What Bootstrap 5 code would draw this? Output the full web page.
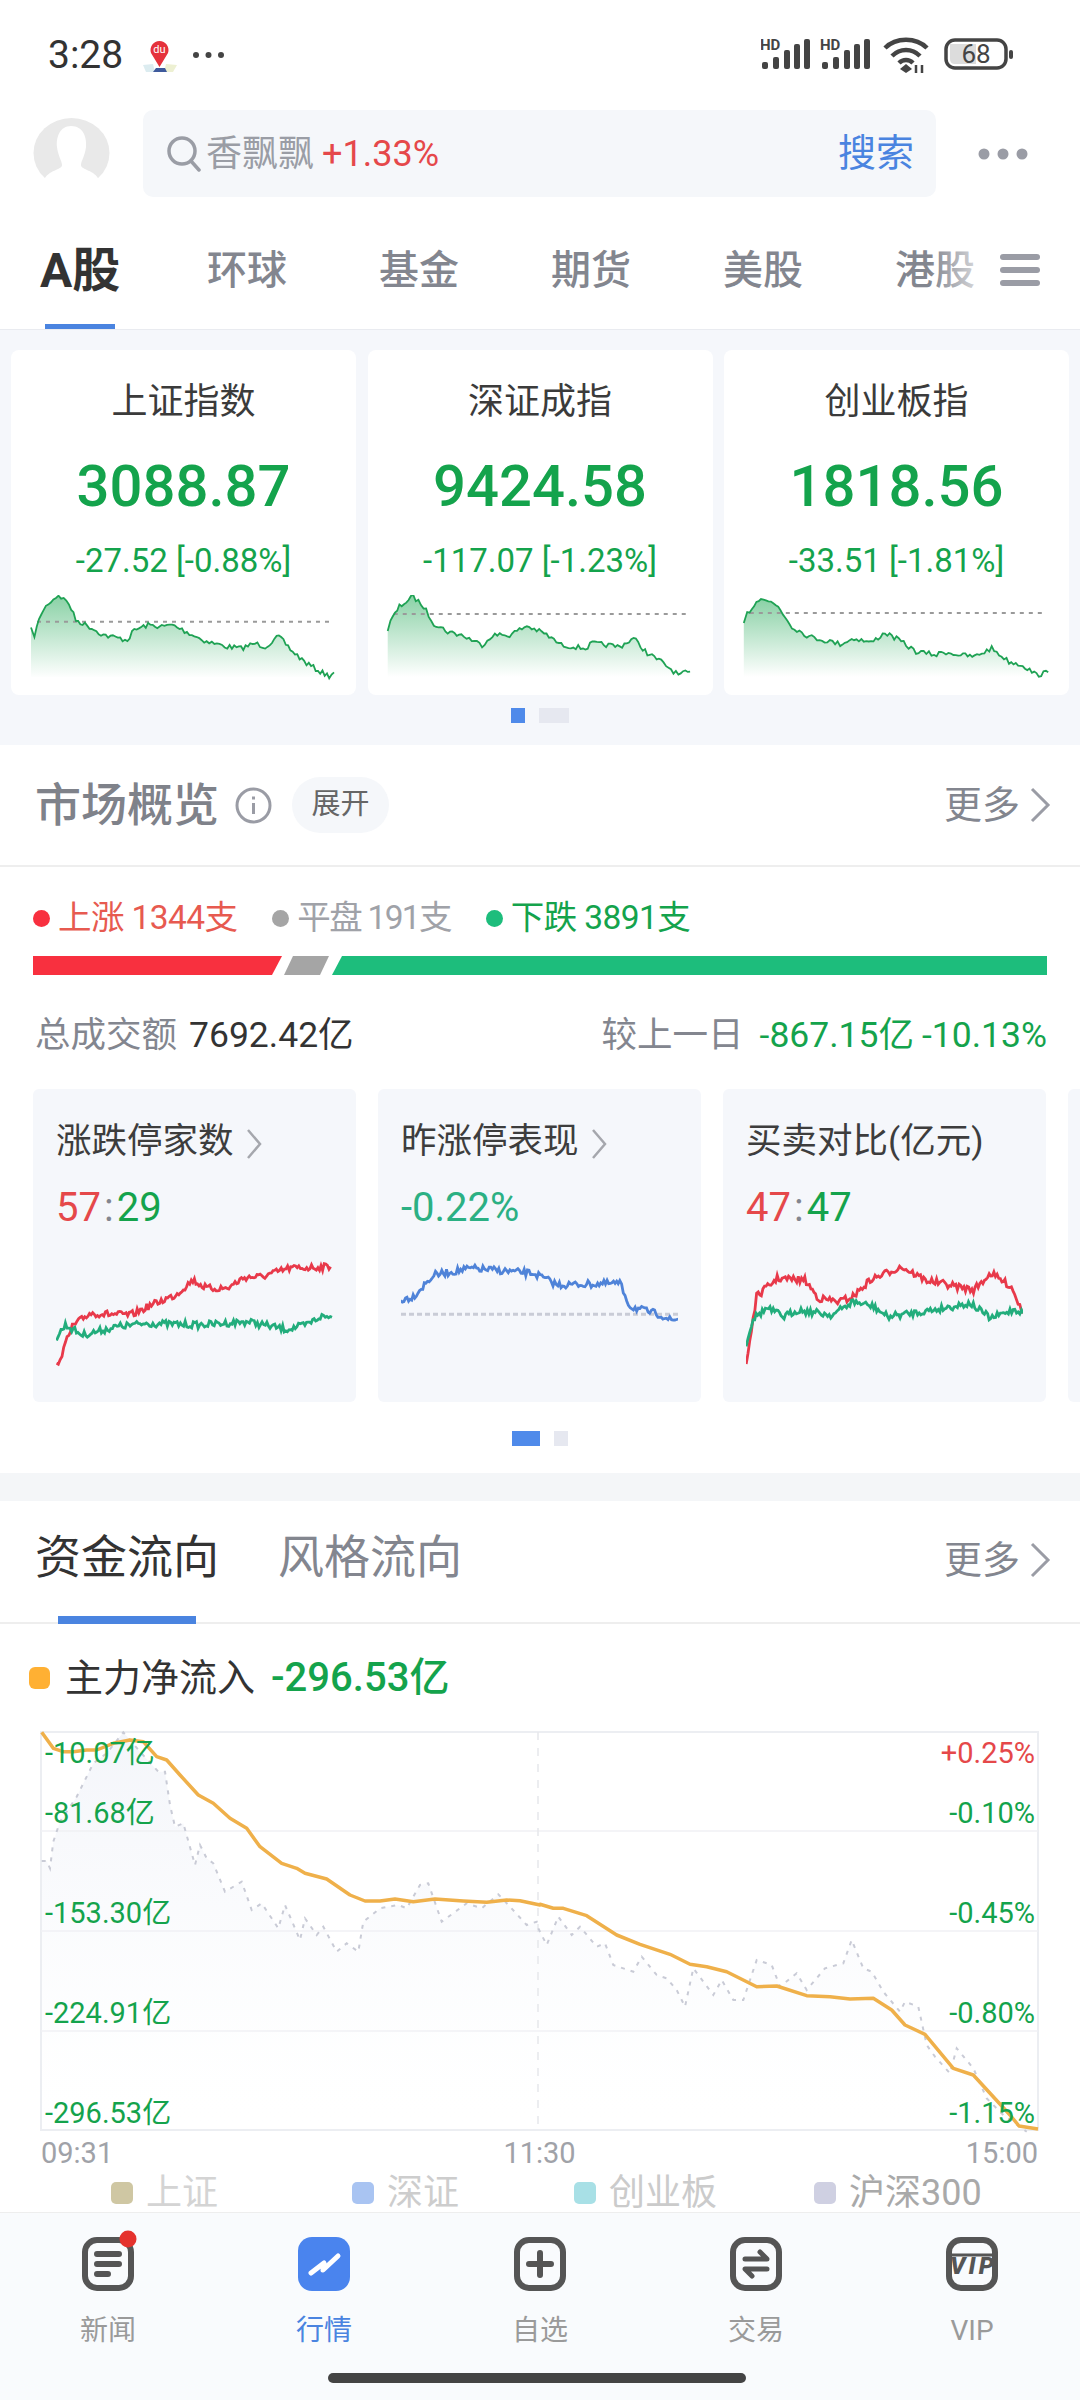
<!DOCTYPE html>
<html lang="zh-CN">
<head>
  <meta charset="UTF-8" />
  <meta name="viewport" content="width=device-width, initial-scale=1.0" />
  <title>行情</title>
  <link href="https://cdn.jsdelivr.net/npm/bootstrap@5.3.3/dist/css/bootstrap.min.css" rel="stylesheet" />
  <style>
    body { width: 1080px; height: 2400px; overflow: hidden; background: #fff; color: #333; font-family: Roboto, "Noto Sans CJK SC", sans-serif; }
    .c-red { color: #e5484a; }
    .c-green { color: #14a34c; }
    .c-gray { color: #83868f; }

    .status-bar { height: 110px; padding: 0 67px 0 48px; }
    .status-time { font-size: 39px; line-height: 40px; color: #333; margin-right: 19px; }
    .status-dots { margin-left: 14px; }

    .search-row { height: 87px; padding-left: 33px; }
    .search-box { width: 793px; height: 87px; margin-left: 33px; padding: 0 22px 0 24px; background: #f5f7fa; border-radius: 10px; font-size: 36px; }
    .search-hint { color: #9a9da5; margin-left: 5px; }
    .search-rise { font-size: 36px; margin-left: 8px; }
    .search-btn { color: #4a84e0; font-size: 38px; margin-left: auto; }
    .search-more { margin-left: 42px; }

    .tabs-row { height: 133px; padding: 51px 0 0 40px; border-bottom: 1px solid #e9ebf0; overflow: hidden; }
    .tab-item { width: 80px; flex: none; margin-right: 92px; font-size: 40px; line-height: 46px; font-weight: 500; color: #83868f; white-space: nowrap; }
    .tab-item.on { margin-right: 87px; font-size: 48px; font-weight: 700; color: #333; }
    .tab-item.on::after { content: ""; display: block; width: 70px; height: 8px; margin: 30px 0 0 5px; background: #4a84e0; }
    .tabs-menu { right: 0; top: 0; bottom: 1px; width: 150px; padding: 57px 0 0 70px; background: linear-gradient(90deg, rgba(255,255,255,0), #fff 47%); }
    .tabs-menu i { display: block; width: 40px; height: 6px; margin-bottom: 7px; border-radius: 3px; background: #9a9ca5; }

    .index-wrap { height: 415px; padding: 20px 11px 0; background: #f5f7fb; }
    .index-card { width: 345px; height: 345px; flex: none; background: #fff; border-radius: 8px; text-align: center; }
    .index-name { margin-top: 27px; font-size: 36px; line-height: 50px; color: #3b3b3b; }
    .index-num { margin-top: 24px; font-size: 58px; line-height: 70px; font-weight: 500; color: #14a34c; }
    .index-delta { margin-top: 20px; font-size: 33px; line-height: 40px; color: #14a34c; white-space: nowrap; }
    .index-card svg { display: block; margin-top: 14px; }

    .pager-blue, .pager-gray { height: 15px; }
    .pager-blue { background: #4f8aea; }
    .pager-gray { background: #e6e8f0; margin-left: 14px; }
    .pager-a .pager-blue { width: 14px; }
    .pager-a .pager-gray { width: 30px; }
    .pager-b .pager-blue { width: 28px; }
    .pager-b .pager-gray { width: 14px; }
    .index-wrap .pager-a { margin-top: 13px; }

    .sect-head { height: 122px; padding: 0 28px 0 35px; border-bottom: 2px solid #eee; }
    .sect-title { font-size: 46px; line-height: 60px; font-weight: 500; color: #7f828a; }
    .more-link { font-size: 38px; line-height: 44px; color: #83868f; }
    .info-icon { margin-left: 16px; }
    .open-pill { width: 97px; height: 56px; margin-left: 20px; border-radius: 28px; background: #f5f7fa; font-size: 29px; color: #666; }

    .market-wrap { height: 728px; background: #fff; }
    .rise-row { height: 40px; margin: 31px 0 0 33px; font-size: 33.5px; line-height: 40px; white-space: nowrap; letter-spacing: -0.6px; }
    .rise-dot { width: 17px; height: 17px; border-radius: 50%; margin-right: 8px; }
    .rise-gap { margin-right: 35px; }
    .dot-r { background: #f8303f; }
    .dot-g { background: #a5a5a5; }
    .dot-t { background: #1dbd7c; }
    .txt-muted { color: #a0a2a8; letter-spacing: -1.7px; }
    .txt-r { color: #e75a50; }

    .ratio-bar { height: 19px; margin: 18px 33px 0; }
    .ratio-r { width: 249px; background: #f8303f; clip-path: polygon(0 0, 100% 0, calc(100% - 10px) 100%, 0 100%); }
    .ratio-g { width: 45px; margin-left: 2px; background: #a5a5a5; clip-path: polygon(9px 0, 100% 0, calc(100% - 9px) 100%, 0 100%); }
    .ratio-t { flex: 1; margin-left: 3px; background: #1dbd7c; clip-path: polygon(10px 0, 100% 0, 100% 100%, 0 100%); }

    .amount-row { height: 40px; margin-top: 40px; padding: 0 33px 0 35px; font-size: 35.5px; line-height: 40px; white-space: nowrap; }
    .amount-val { margin-left: 12px; color: #333; }

    .mini-row { margin: 34px 0 29px 33px; gap: 22px; overflow: hidden; }
    .mini-card { width: 323px; height: 313px; flex: none; padding: 0 23px; background: #f5f7fb; border-radius: 6px; }
    .mini-title { margin-top: 30px; font-size: 35.5px; line-height: 44px; color: #3d3d3d; white-space: nowrap; }
    .mini-title svg { margin-left: 12px; }
    .mini-val { margin-top: 22px; font-size: 40px; line-height: 46px; }
    .mini-colon { padding: 0 3px; }
    .mini-teal { color: #2bb083; }
    .mini-card svg.spark { display: block; margin-top: 29px; }

    .band { height: 28px; background: #f4f6f8; }

    .flow-wrap { height: 711px; background: #fff; }
    .flow-tabs { height: 123px; padding: 26px 28px 0 35px; border-bottom: 2px solid #eee; position: relative; }
    .flow-tab { width: 183px; margin-right: 60px; font-size: 46px; line-height: 60px; color: #333; white-space: nowrap; }
    .flow-tab.off { color: #83868f; }
    .flow-tab.on::after { content: ""; display: block; width: 138px; height: 8px; margin: 29px 0 0 23px; background: #4a84e0; }
    .flow-more { margin-left: auto; margin-top: 11px; align-self: flex-start; }

    .main-legend { height: 40px; margin: 34px 0 0 29px; font-size: 38px; line-height: 40px; white-space: nowrap; }
    .main-dot { width: 21px; height: 22px; margin-right: 15px; border-radius: 6px; background: #ffb033; }
    .main-val { margin-left: 16px; font-weight: 500; font-size: 40px; }

    .chart-box { width: 997px; height: 398px; margin: 34px 0 0 41px; }
    .chart-box svg { display: block; overflow: visible; }
    .axis-col { top: 6px; font-size: 29px; line-height: 30px; }
    .axis-col span { display: block; margin-bottom: 70px; }
    .axis-col span:first-child { margin-bottom: 30px; }
    .axis-left { left: 4px; color: #14a34c; }
    .axis-right { right: 3px; text-align: right; color: #14a34c; }
    .time-row { width: 997px; height: 30px; margin: 8px 0 0 41px; font-size: 29px; line-height: 30px; color: #a0a2a8; }

    .idx-legend { margin: 7px 0 0 111px; height: 36px; font-size: 36px; line-height: 36px; white-space: nowrap; }
    .idx-item { flex: none; }
    .idx-item:nth-child(1) { width: 241px; color: #d4d4d4; }
    .idx-item:nth-child(2) { width: 222px; color: #cdcdcd; }
    .idx-item:nth-child(3) { width: 240px; color: #cbcbcb; }
    .idx-item:nth-child(4) { color: #a9a9a9; }
    .idx-sq { width: 22px; height: 22px; margin-right: 13px; border-radius: 5px; }
    .sq-a { background: #cfc7a3; }
    .sq-b { background: #a9c4f2; }
    .sq-c { background: #a8e0e6; }
    .sq-d { background: #cfd0e2; }

    .tab-bar { height: 188px; background: #f9fbfd; border-top: 1px solid #eee; }
    .bar-item { width: 216px; padding-top: 24px; text-align: center; font-size: 28px; line-height: 34px; color: #9a9a9a; }
    .bar-item svg { display: block; margin: 0 auto 23px; overflow: visible; }
    .bar-item.on { color: #4a84e0; }
    .home-line { left: 328px; top: 160px; width: 418px; height: 10px; border-radius: 5px; background: #444; }
  </style>
</head>
<body>
  <div class="status-bar d-flex align-items-center">
    <span class="status-time">3:28</span>
    <svg width="36" height="36" viewBox="0 0 36 36">
      <path d="M1 28 L11 27 L13 35 L4 35 Z" fill="#dcecf0" />
      <path d="M24 27 L35 28 L31 35 L22 35 Z" fill="#edf0d2" />
      <path d="M14 31 L23 31 L25 35 L11 35 Z" fill="#3e5a9c" />
      <path d="M9 16 A9 9 0 1 1 26 16 L17.5 30 Z" fill="#e5323c" />
      <text x="17.5" y="16" font-size="11" fill="#fff" text-anchor="middle" font-family="Roboto, sans-serif">du</text>
    </svg>
    <svg class="status-dots" width="34" height="8" viewBox="0 0 34 8" fill="#444">
      <circle cx="4" cy="4" r="3" /><circle cx="16.5" cy="4" r="3" /><circle cx="29" cy="4" r="3" />
    </svg>
    <svg class="ms-auto" width="252" height="36" viewBox="0 0 252 36">
      <g fill="#444">
        <text x="-1" y="13" font-size="15" font-weight="700" font-family="Roboto, sans-serif">HD</text>
        <rect x="1" y="25" width="6" height="7" rx="2" /><rect x="12" y="20" width="6" height="12" rx="2" /><rect x="23" y="13" width="6" height="19" rx="2" /><rect x="33" y="7" width="6" height="25" rx="2" /><rect x="43" y="2" width="6" height="30" rx="2" />
      </g>
      <g fill="#444" transform="translate(60)">
        <text x="-1" y="13" font-size="15" font-weight="700" font-family="Roboto, sans-serif">HD</text>
        <rect x="1" y="25" width="6" height="7" rx="2" /><rect x="12" y="20" width="6" height="12" rx="2" /><rect x="23" y="13" width="6" height="19" rx="2" /><rect x="33" y="7" width="6" height="25" rx="2" /><rect x="43" y="2" width="6" height="30" rx="2" />
      </g>
      <g fill="none" stroke="#444" stroke-width="4.5" transform="translate(122 -2)">
        <path d="M2 13 C13 2 33 2 44 13" />
        <path d="M9 21 C17 13 29 13 37 21" />
        <path d="M16 28 C20 24 26 24 30 28" />
      </g>
      <path d="M139 32 L145 27 L151 32 L145 36 Z" fill="#444" />
      <path d="M155 36 V28 M161 28 V36" stroke="#444" stroke-width="2.5" />
      <rect x="185" y="3" width="60" height="28" rx="9" fill="none" stroke="#444" stroke-width="3.5" />
      <path d="M189 7 H215 V27 H194 Q189 27 189 22 Z" fill="#dcdcdc" />
      <text x="215" y="26" font-size="26" fill="#444" text-anchor="middle" font-family="Roboto, sans-serif">68</text>
      <rect x="248" y="13" width="4" height="9" rx="2" fill="#444" />
    </svg>
  </div>

  <div class="search-row d-flex align-items-center">
    <svg width="77" height="72" viewBox="0 0 77 72">
      <ellipse cx="38.500" cy="35" rx="38" ry="35" fill="#e9e9e9" />
      <path d="M38 8 C50 8 54 19 53 29 C52 38 48 43 48 47 C48 52 62 52 66 62 C58 69 48 72 38 72 C28 72 18 69 11 62 C15 52 29 52 29 47 C29 43 25 38 24 29 C23 19 27 8 38 8 Z" fill="#fff" />
    </svg>
    <div class="search-box d-flex align-items-center">
      <svg width="34" height="36" viewBox="0 0 34 36" fill="none" stroke="#9a9da5" stroke-width="3.5">
        <circle cx="15" cy="15" r="13" /><path d="M24 25 L32 34" stroke-linecap="round" />
      </svg>
      <span class="search-hint">香飘飘</span>
      <span class="search-rise c-red">+1.33%</span>
      <span class="search-btn">搜索</span>
    </div>
    <svg class="search-more" width="50" height="12" viewBox="0 0 50 12" fill="#9a9ca5">
      <circle cx="6" cy="6" r="5.500" /><circle cx="25" cy="6" r="5.500" /><circle cx="44" cy="6" r="5.500" />
    </svg>
  </div>

  <div class="tabs-row d-flex position-relative">
    <div class="tab-item on">A股</div>
    <div class="tab-item">环球</div>
    <div class="tab-item">基金</div>
    <div class="tab-item">期货</div>
    <div class="tab-item">美股</div>
    <div class="tab-item">港股</div>
    <div class="tabs-menu position-absolute"><i></i><i></i><i></i></div>
  </div>

  <div class="index-wrap">
    <div class="d-flex justify-content-between">
      <div class="index-card">
        <div class="index-name">上证指数</div>
        <div class="index-num">3088.87</div>
        <div class="index-delta">-27.52 [-0.88%]</div>
        <svg class="js-index" data-i="0" width="345" height="90"></svg>
      </div>
      <div class="index-card">
        <div class="index-name">深证成指</div>
        <div class="index-num">9424.58</div>
        <div class="index-delta">-117.07 [-1.23%]</div>
        <svg class="js-index" data-i="1" width="345" height="90"></svg>
      </div>
      <div class="index-card">
        <div class="index-name">创业板指</div>
        <div class="index-num">1818.56</div>
        <div class="index-delta">-33.51 [-1.81%]</div>
        <svg class="js-index" data-i="2" width="345" height="90"></svg>
      </div>
    </div>
    <div class="pager-a d-flex justify-content-center"><div class="pager-blue"></div><div class="pager-gray"></div></div>
  </div>

  <div class="market-wrap">
    <div class="sect-head d-flex align-items-center">
      <span class="sect-title">市场概览</span>
      <svg class="info-icon" width="37" height="37" viewBox="0 0 37 37" fill="none" stroke="#9a9ca5" stroke-width="3">
        <circle cx="18.500" cy="18.500" r="16.500" /><path d="M18.500 16 V27" /><path d="M18.500 9.500 V12.500" />
      </svg>
      <span class="open-pill d-flex align-items-center justify-content-center">展开</span>
      <span class="more-link ms-auto d-flex align-items-center">更多
        <svg class="ms-2" width="24" height="36" viewBox="0 0 24 36" fill="none" stroke="#9a9ca5" stroke-width="3"><path d="M4 2 L20 18 L4 34" /></svg>
      </span>
    </div>

    <div class="rise-row d-flex align-items-center">
      <span class="rise-dot dot-r"></span><span class="txt-r rise-gap">上涨 1344支</span>
      <span class="rise-dot dot-g"></span><span class="txt-muted rise-gap">平盘 191支</span>
      <span class="rise-dot dot-t"></span><span class="c-green">下跌 3891支</span>
    </div>

    <div class="ratio-bar d-flex">
      <div class="ratio-r"></div><div class="ratio-g"></div><div class="ratio-t"></div>
    </div>

    <div class="amount-row d-flex">
      <span class="c-gray">总成交额</span><span class="amount-val">7692.42亿</span>
      <span class="c-gray ms-auto">较上一日</span>
      <span class="c-green ms-3">-867.15亿</span>
      <span class="c-green ms-2">-10.13%</span>
    </div>

    <div class="mini-row d-flex">
      <div class="mini-card">
        <div class="mini-title">涨跌停家数<svg width="16" height="32" viewBox="0 0 16 32" fill="none" stroke="#a5a7ad" stroke-width="2.500"><path d="M2 2 L14 16 L2 30" /></svg></div>
        <div class="mini-val"><span class="c-red">57</span><span class="c-gray mini-colon">:</span><span class="c-green">29</span></div>
        <svg class="spark js-mini" data-i="0" width="277" height="110"></svg>
      </div>
      <div class="mini-card">
        <div class="mini-title">昨涨停表现<svg width="16" height="32" viewBox="0 0 16 32" fill="none" stroke="#a5a7ad" stroke-width="2.500"><path d="M2 2 L14 16 L2 30" /></svg></div>
        <div class="mini-val mini-teal">-0.22%</div>
        <svg class="spark js-mini" data-i="1" width="277" height="110"></svg>
      </div>
      <div class="mini-card">
        <div class="mini-title">买卖对比(亿元)</div>
        <div class="mini-val"><span class="c-red">47</span><span class="c-gray mini-colon">:</span><span class="c-green">47</span></div>
        <svg class="spark js-mini" data-i="2" width="277" height="110"></svg>
      </div>
      <div class="mini-card"></div>
    </div>

    <div class="pager-b d-flex justify-content-center"><div class="pager-blue"></div><div class="pager-gray"></div></div>
  </div>

  <div class="band"></div>

  <div class="flow-wrap">
    <div class="flow-tabs d-flex">
      <div class="flow-tab on">资金流向</div>
      <div class="flow-tab off">风格流向</div>
      <span class="more-link flow-more d-flex align-items-center">更多
        <svg class="ms-2" width="24" height="36" viewBox="0 0 24 36" fill="none" stroke="#9a9ca5" stroke-width="3"><path d="M4 2 L20 18 L4 34" /></svg>
      </span>
    </div>

    <div class="main-legend d-flex align-items-center">
      <span class="main-dot"></span><span>主力净流入</span><span class="main-val c-green">-296.53亿</span>
    </div>

    <div class="chart-box position-relative">
      <svg id="flowChart" width="997" height="398"></svg>
      <div class="axis-col axis-left position-absolute">
        <span>-10.07亿</span><span>-81.68亿</span><span>-153.30亿</span><span>-224.91亿</span><span>-296.53亿</span>
      </div>
      <div class="axis-col axis-right position-absolute">
        <span class="c-red">+0.25%</span><span>-0.10%</span><span>-0.45%</span><span>-0.80%</span><span>-1.15%</span>
      </div>
    </div>

    <div class="time-row d-flex justify-content-between"><span>09:31</span><span>11:30</span><span>15:00</span></div>

    <div class="idx-legend d-flex">
      <div class="idx-item d-flex align-items-center"><span class="idx-sq sq-a"></span>上证</div>
      <div class="idx-item d-flex align-items-center"><span class="idx-sq sq-b"></span>深证</div>
      <div class="idx-item d-flex align-items-center"><span class="idx-sq sq-c"></span>创业板</div>
      <div class="idx-item d-flex align-items-center"><span class="idx-sq sq-d"></span>沪深300</div>
    </div>
  </div>

  <div class="tab-bar d-flex position-relative">
    <div class="bar-item">
      <svg width="52" height="54" viewBox="0 0 52 54" fill="none" stroke="#555" stroke-width="6" stroke-linecap="round">
        <rect x="3" y="3" width="46" height="48" rx="12" />
        <path d="M15 17 H37 M15 27 H37 M15 37 H26" />
        <circle cx="46" cy="2" r="8.500" fill="#e5322d" stroke="none" />
      </svg>
      新闻
    </div>
    <div class="bar-item on">
      <svg width="52" height="54" viewBox="0 0 52 54" fill="none">
        <rect width="52" height="54" rx="14" fill="#4a84ee" />
        <path d="M13 36 L26 26 L25 33 L40 19" stroke="#fff" stroke-width="5" stroke-linecap="round" stroke-linejoin="round" />
      </svg>
      行情
    </div>
    <div class="bar-item">
      <svg width="52" height="54" viewBox="0 0 52 54" fill="none" stroke="#555" stroke-width="6">
        <rect x="3" y="3" width="46" height="48" rx="12" />
        <path d="M15 27 H37 M26 16 V38" stroke-linecap="round" />
      </svg>
      自选
    </div>
    <div class="bar-item">
      <svg width="52" height="54" viewBox="0 0 52 54" fill="none" stroke="#555" stroke-width="6">
        <rect x="3" y="3" width="46" height="48" rx="12" />
        <path d="M15 22 H37 L30 15 M37 32 H15 L22 39" stroke-width="5" stroke-linecap="round" stroke-linejoin="round" />
      </svg>
      交易
    </div>
    <div class="bar-item">
      <svg width="52" height="54" viewBox="0 0 52 54" fill="none" stroke="#555" stroke-width="6">
        <rect x="3" y="3" width="46" height="48" rx="12" />
        <path d="M5 18 H47" stroke-width="3" />
        <text x="26" y="37" font-size="24" font-weight="900" font-style="italic" fill="#555" stroke="none" text-anchor="middle" textLength="44" font-family="Roboto, sans-serif">VIP</text>
      </svg>
      VIP
    </div>
    <div class="home-line position-absolute"></div>
  </div>

  <script src="https://cdn.jsdelivr.net/npm/bootstrap@5.3.3/dist/js/bootstrap.bundle.min.js"></script>
  <script>
    const NS = "http://www.w3.org/2000/svg";
    let seed = 7;
    function rnd() {
      seed = (seed * 16807) % 2147483647;
      return seed / 2147483647;
    }

    // ломаная по опорным точкам + небольшой шум, как у минутного графика
    function noisy(points, step, amp) {
      const out = [];
      for (let i = 0; i < points.length - 1; i++) {
        const [x1, y1] = points[i];
        const [x2, y2] = points[i + 1];
        const n = Math.max(1, Math.round((x2 - x1) / step));
        for (let k = 0; k < n; k++) {
          const t = k / n;
          out.push([x1 + (x2 - x1) * t, y1 + (y2 - y1) * t + (rnd() - 0.5) * amp]);
        }
      }
      out.push(points[points.length - 1]);
      return out;
    }

    function toAttr(points) {
      return points.map(p => p[0].toFixed(1) + "," + p[1].toFixed(1)).join(" ");
    }

    function add(svg, tag, attrs) {
      const el = document.createElementNS(NS, tag);
      for (const k in attrs) el.setAttribute(k, attrs[k]);
      svg.appendChild(el);
      return el;
    }

    function pairs(flat, fn) {
      const out = [];
      for (let i = 0; i < flat.length; i += 2) out.push(fn(flat[i], flat[i + 1]));
      return out;
    }

    // Индексы: x/y сняты с увеличенного скриншота
    const indexData = [
      { left: 11, dash: 845, pts: [45,870,50,885,60,820,70,790,85,765,100,790,110,840,130,860,150,885,185,900,195,870,215,855,235,860,250,855,275,880,300,905,330,920,350,925,370,910,385,920,405,890,425,935,445,970,465,995,478,1008,485,997] },
      { left: 368, dash: 822, pts: [563,870,567,845,580,800,600,770,615,800,630,850,650,875,670,885,700,915,715,885,740,885,765,858,790,880,815,915,850,925,860,910,880,915,900,920,920,895,940,940,960,965,985,1005,1002,995] },
      { left: 724, dash: 819, pts: [1080,855,1085,820,1105,770,1130,800,1150,860,1175,890,1220,912,1240,895,1265,908,1285,878,1305,900,1330,935,1360,945,1370,935,1395,945,1415,950,1440,925,1465,965,1485,975,1505,1005,1522,997] }
    ];

    document.querySelectorAll(".js-index").forEach(svg => {
      const d = indexData[+svg.dataset.i];
      const conv = (x, y) => [x / 1.452 - d.left, 340 + y / 3 - 595];
      const line = noisy(pairs(d.pts, conv), 2.5, 5);
      const gid = "ig" + svg.dataset.i;
      const defs = add(svg, "defs", {});
      const grad = add(defs, "linearGradient", { id: gid, x1: 0, y1: 0, x2: 0, y2: 1 });
      add(grad, "stop", { offset: 0, "stop-color": "#14a34c", "stop-opacity": 0.5 });
      add(grad, "stop", { offset: 1, "stop-color": "#14a34c", "stop-opacity": 0 });
      const first = line[0][0], last = line[line.length - 1][0];
      add(svg, "polygon", { points: first + ",82 " + toAttr(line) + " " + last + ",82", fill: "url(#" + gid + ")" });
      const dashY = 340 + d.dash / 3 - 595;
      add(svg, "line", { x1: first + 6, x2: last - 2, y1: dashY, y2: dashY, stroke: "#9a9a9a", "stroke-width": 2, "stroke-dasharray": "4 5" });
      add(svg, "polyline", { points: toAttr(line), fill: "none", stroke: "#1fa254", "stroke-width": 1.8 });
    });

    // Мини-графики
    const miniData = [
      { left: 56, lines: [
        { color: "#e8394a", pts: [82,885,90,850,105,770,130,730,190,735,220,705,255,675,280,630,300,655,330,655,355,622,380,620,420,595,480,590] },
        { color: "#22ad7c", pts: [82,803,95,765,120,795,170,770,215,760,290,765,360,755,415,778,445,765,465,740,482,742] }
      ] },
      { left: 401, dash: 733, lines: [
        { color: "#4f83d8", pts: [582,690,600,680,630,615,685,595,775,610,810,645,900,640,915,710,960,735,975,752,985,747] }
      ] },
      { left: 747, lines: [
        { color: "#e8394a", pts: [1085,880,1100,680,1130,625,1170,630,1190,685,1220,695,1240,680,1265,630,1310,590,1345,630,1415,660,1440,610,1470,650,1487,730] },
        { color: "#22ad7c", pts: [1085,820,1095,745,1115,715,1140,740,1160,720,1210,735,1240,695,1270,710,1290,740,1350,722,1410,700,1440,745,1475,718,1487,730] }
      ] }
    ];

    document.querySelectorAll(".js-mini").forEach(svg => {
      const d = miniData[+svg.dataset.i];
      const conv = (x, y) => [x / 1.452 - d.left, 1070 + y / 3 - 1260];
      if (d.dash) {
        const y = 1070 + d.dash / 3 - 1260;
        add(svg, "line", { x1: 0, x2: 277, y1: y, y2: y, stroke: "#c9ccd6", "stroke-width": 3, "stroke-dasharray": "5 3" });
      }
      d.lines.forEach(l => {
        add(svg, "polyline", { points: toAttr(noisy(pairs(l.pts, conv), 1.6, 7)), fill: "none", stroke: l.color, "stroke-width": 2.8 });
      });
    });

    // Большой график потоков
    const flow = document.getElementById("flowChart");
    const left7 = (x, y) => [30 + x / 3 - 41, 1725 + y / 3 - 1732];
    const left8 = (x, y) => [530 + x / 3 - 41, 1725 + y / 3 - 1732];

    const grayPts = pairs([35,408,50,408,60,430,70,350,90,290,140,215,190,115,230,85,280,22,330,80,385,140,405,140,420,240,435,305,460,295,495,420,510,360,530,400,550,415,585,500,635,470,665,555,695,535,745,610,765,540,810,645,825,580,860,630,880,605,920,680,950,655,985,680,1000,590,1050,550,1105,540,1130,550,1170,480,1195,475,1235,590,1310,535,1355,550,1405,508,1440,545,1490,600,1520,590], left7)
      .concat(pairs([25,610,50,660,85,575,125,630,150,605,200,665,225,655,250,720,310,740,335,695,380,750,410,760,440,795,465,845,490,730,550,810,575,765,610,825,640,825,680,705,725,720,750,785,800,745,830,795,885,730,940,715,965,645,1000,730,1025,740,1060,800,1110,860,1125,830,1165,845,1190,960,1215,995,1260,1045,1280,970,1330,1030,1370,1120,1420,1170,1490,1220], left8));

    const orangePts = pairs([35,22,70,70,100,80,130,80,170,75,200,75,250,55,300,45,340,50,380,95,410,105,450,150,505,210,550,235,600,280,650,310,690,365,755,415,800,430,825,445,890,462,960,510,1005,528,1050,528,1095,522,1150,530,1215,522,1300,528,1370,532,1430,525,1470,527,1530,540], left7)
      .concat(pairs([30,538,70,550,100,550,170,572,260,630,330,658,420,688,480,718,530,725,590,740,680,785,740,783,830,812,900,815,960,822,1030,820,1085,855,1125,900,1185,928,1270,1030,1330,1050,1440,1170], left8))
      .concat([[978, 394], [997, 397]]);

    const fdefs = add(flow, "defs", {});
    const fg = add(fdefs, "linearGradient", { id: "flowFill", x1: 0, y1: 0, x2: 0, y2: 1 });
    add(fg, "stop", { offset: 0, "stop-color": "#f1f3f9", "stop-opacity": 0.8 });
    add(fg, "stop", { offset: 0.75, "stop-color": "#f5f7fb", "stop-opacity": 0.15 });
    add(fg, "stop", { offset: 1, "stop-color": "#fff", "stop-opacity": 0 });

    add(flow, "polygon", { points: "0,398 " + toAttr(grayPts) + " 997,398", fill: "url(#flowFill)" });
    add(flow, "rect", { x: 0, y: 0, width: 997, height: 398, fill: "none", stroke: "#eceef2", "stroke-width": 2 });
    [99, 199, 299].forEach(y => add(flow, "line", { x1: 0, x2: 997, y1: y, y2: y, stroke: "#f0f1f4", "stroke-width": 1.5 }));
    add(flow, "line", { x1: 497, x2: 497, y1: 0, y2: 398, stroke: "#e6e8ec", "stroke-width": 1.5, "stroke-dasharray": "8 8" });
    add(flow, "polyline", { points: toAttr(grayPts), fill: "none", stroke: "#c9cbd6", "stroke-width": 2, "stroke-dasharray": "4 6" });
    add(flow, "polyline", { points: toAttr(orangePts), fill: "none", stroke: "#efb04a", "stroke-width": 3.5, "stroke-linejoin": "round" });
  </script>
</body>
</html>
